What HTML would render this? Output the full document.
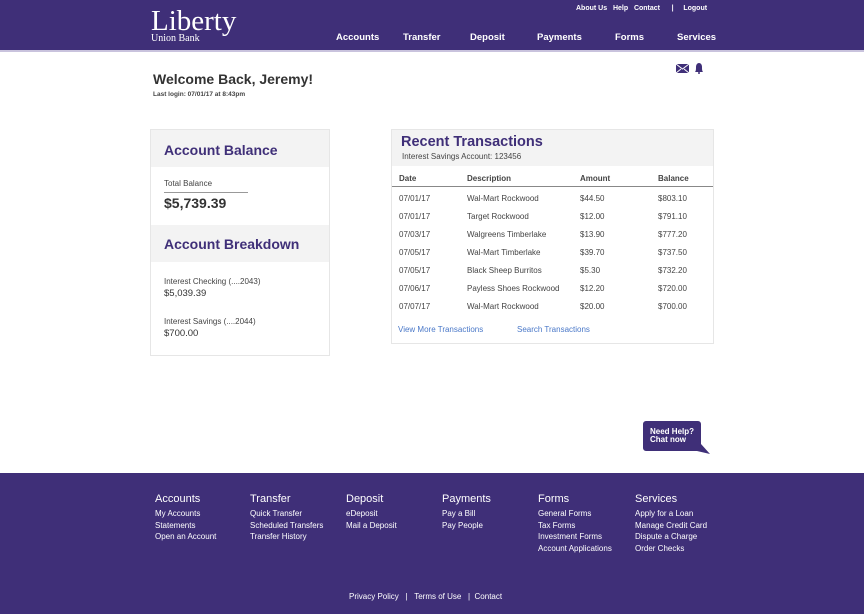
<!DOCTYPE html>
<html><head><meta charset="utf-8"><style>
*{margin:0;padding:0;box-sizing:border-box}
body{width:864px;height:614px;position:relative;background:#fff;font-family:"Liberation Sans",sans-serif;color:#333;overflow:hidden}
.a{position:absolute;white-space:nowrap}
.hdr{position:absolute;left:0;top:0;width:864px;height:52px;background:#3f2f78;border-bottom:2px solid #c9c3dd}
.w{color:#fff}
.card{position:absolute;background:#fff;border:1px solid #e6e6e6}
.band{position:absolute;left:0;right:0;background:#f3f3f3}
.pt{color:#3f2f78;font-size:14px;font-weight:bold}
.s{font-size:8px;color:#444}
.lnk{color:#4a78c8;font-size:8px}
.ft{position:absolute;left:0;top:473px;width:864px;height:141px;background:#3f2f78}
.fh{font-size:11px;color:#fff}
.fl{font-size:8px;color:#fff;line-height:11.5px}
</style></head><body>
<div class="hdr"></div>
<div class="a w" style="left:151px;top:7px;font-family:'Liberation Serif',serif;font-size:29px;line-height:29px">Liberty</div>
<div class="a w" style="left:151px;top:33px;font-family:'Liberation Serif',serif;font-size:10px">Union Bank</div>
<div class="a w" style="left:576px;top:5px;font-size:7px;font-weight:bold">About Us &nbsp;&nbsp;Help &nbsp;&nbsp;Contact &nbsp;&nbsp;&nbsp;&nbsp;&nbsp;| &nbsp;&nbsp;&nbsp;&nbsp;Logout</div>
<div class="a w" style="left:336px;top:32px;font-size:9.5px;font-weight:bold">Accounts</div>
<div class="a w" style="left:403px;top:32px;font-size:9.5px;font-weight:bold">Transfer</div>
<div class="a w" style="left:470px;top:32px;font-size:9.5px;font-weight:bold">Deposit</div>
<div class="a w" style="left:537px;top:32px;font-size:9.5px;font-weight:bold">Payments</div>
<div class="a w" style="left:615px;top:32px;font-size:9.5px;font-weight:bold">Forms</div>
<div class="a w" style="left:677px;top:32px;font-size:9.5px;font-weight:bold">Services</div>

<div class="a" style="left:153px;top:71px;font-size:14px;font-weight:bold;color:#333">Welcome Back, Jeremy!</div>
<div class="a" style="left:153px;top:91px;font-size:6.5px;font-weight:bold;color:#444">Last login: 07/01/17 at 8:43pm</div>
<svg class="a" style="left:675px;top:62px" width="32" height="12"><rect x="1" y="2" width="13" height="9" fill="#3f2f78"/><path d="M1 2l6.5 5 6.5-5M1 11l5-4M14 11l-5-4" stroke="#fff" stroke-width="1" fill="none"/><path d="M20 10c1-1 1-3 1-5s1-4 3-4 3 2 3 4 0 4 1 5z" fill="#3f2f78"/><circle cx="24" cy="11" r="1" fill="#3f2f78"/></svg>

<div class="card" style="left:150px;top:129px;width:180px;height:227px">
 <div class="band" style="top:0;height:37px"></div>
 <div class="a pt" style="left:13px;top:12px">Account Balance</div>
 <div class="a s" style="left:13px;top:49px">Total Balance</div>
 <div class="a" style="left:13px;top:62px;width:84px;border-top:1px solid #999"></div>
 <div class="a" style="left:13px;top:65px;font-size:14px;font-weight:bold;color:#333">$5,739.39</div>
 <div class="band" style="top:95px;height:37px"></div>
 <div class="a pt" style="left:13px;top:106px">Account Breakdown</div>
 <div class="a s" style="left:13px;top:147px">Interest Checking (....2043)</div>
 <div class="a" style="left:13px;top:158px;font-size:9.5px">$5,039.39</div>
 <div class="a s" style="left:13px;top:187px">Interest Savings (....2044)</div>
 <div class="a" style="left:13px;top:198px;font-size:9.5px">$700.00</div>
</div>

<div class="card" style="left:391px;top:129px;width:323px;height:215px">
 <div class="band" style="top:0;height:36px"></div>
 <div class="a pt" style="left:9px;top:4px;font-size:14.5px">Recent Transactions</div>
 <div class="a s" style="left:10px;top:22px">Interest Savings Account: 123456</div>
 <div class="a s" style="left:7px;top:44px;font-weight:bold">Date</div>
 <div class="a s" style="left:75px;top:44px;font-weight:bold">Description</div>
 <div class="a s" style="left:188px;top:44px;font-weight:bold">Amount</div>
 <div class="a s" style="left:266px;top:44px;font-weight:bold">Balance</div>
 <div class="a" style="left:0;top:56px;width:321px;border-top:1px solid #888"></div>
 <div class="a lnk" style="left:6px;top:195px">View More Transactions</div>
 <div class="a lnk" style="left:125px;top:195px">Search Transactions</div>
</div>
<div class="a s" style="left:399px;top:190px;line-height:18px">07/01/17<br>07/01/17<br>07/03/17<br>07/05/17<br>07/05/17<br>07/06/17<br>07/07/17</div>
<div class="a s" style="left:467px;top:190px;line-height:18px">Wal-Mart Rockwood<br>Target Rockwood<br>Walgreens Timberlake<br>Wal-Mart Timberlake<br>Black Sheep Burritos<br>Payless Shoes Rockwood<br>Wal-Mart Rockwood</div>
<div class="a s" style="left:580px;top:190px;line-height:18px">$44.50<br>$12.00<br>$13.90<br>$39.70<br>$5.30<br>$12.20<br>$20.00</div>
<div class="a s" style="left:658px;top:190px;line-height:18px">$803.10<br>$791.10<br>$777.20<br>$737.50<br>$732.20<br>$720.00<br>$700.00</div>

<svg class="a" style="left:642px;top:420px" width="70" height="36"><path d="M4 1h52a3 3 0 0 1 3 3v20l9 10-13-3H4a3 3 0 0 1-3-3V4a3 3 0 0 1 3-3z" fill="#3f2f78"/></svg>
<div class="a w" style="left:650px;top:428px;font-size:8px;font-weight:bold;line-height:8px">Need Help?<br>Chat now</div>

<div class="ft"></div>
<div class="a fh" style="left:155px;top:493px">Accounts</div>
<div class="a fl" style="left:155px;top:508px">My Accounts<br>Statements<br>Open an Account</div>
<div class="a fh" style="left:250px;top:493px">Transfer</div>
<div class="a fl" style="left:250px;top:508px">Quick Transfer<br>Scheduled Transfers<br>Transfer History</div>
<div class="a fh" style="left:346px;top:493px">Deposit</div>
<div class="a fl" style="left:346px;top:508px">eDeposit<br>Mail a Deposit</div>
<div class="a fh" style="left:442px;top:493px">Payments</div>
<div class="a fl" style="left:442px;top:508px">Pay a Bill<br>Pay People</div>
<div class="a fh" style="left:538px;top:493px">Forms</div>
<div class="a fl" style="left:538px;top:508px">General Forms<br>Tax Forms<br>Investment Forms<br>Account Applications</div>
<div class="a fh" style="left:635px;top:493px">Services</div>
<div class="a fl" style="left:635px;top:508px">Apply for a Loan<br>Manage Credit Card<br>Dispute a Charge<br>Order Checks</div>
<div class="a w" style="left:349px;top:592px;font-size:8px">Privacy Policy &nbsp;&nbsp;| &nbsp;&nbsp;Terms of Use &nbsp;&nbsp;| &nbsp;Contact</div>
</body></html>
